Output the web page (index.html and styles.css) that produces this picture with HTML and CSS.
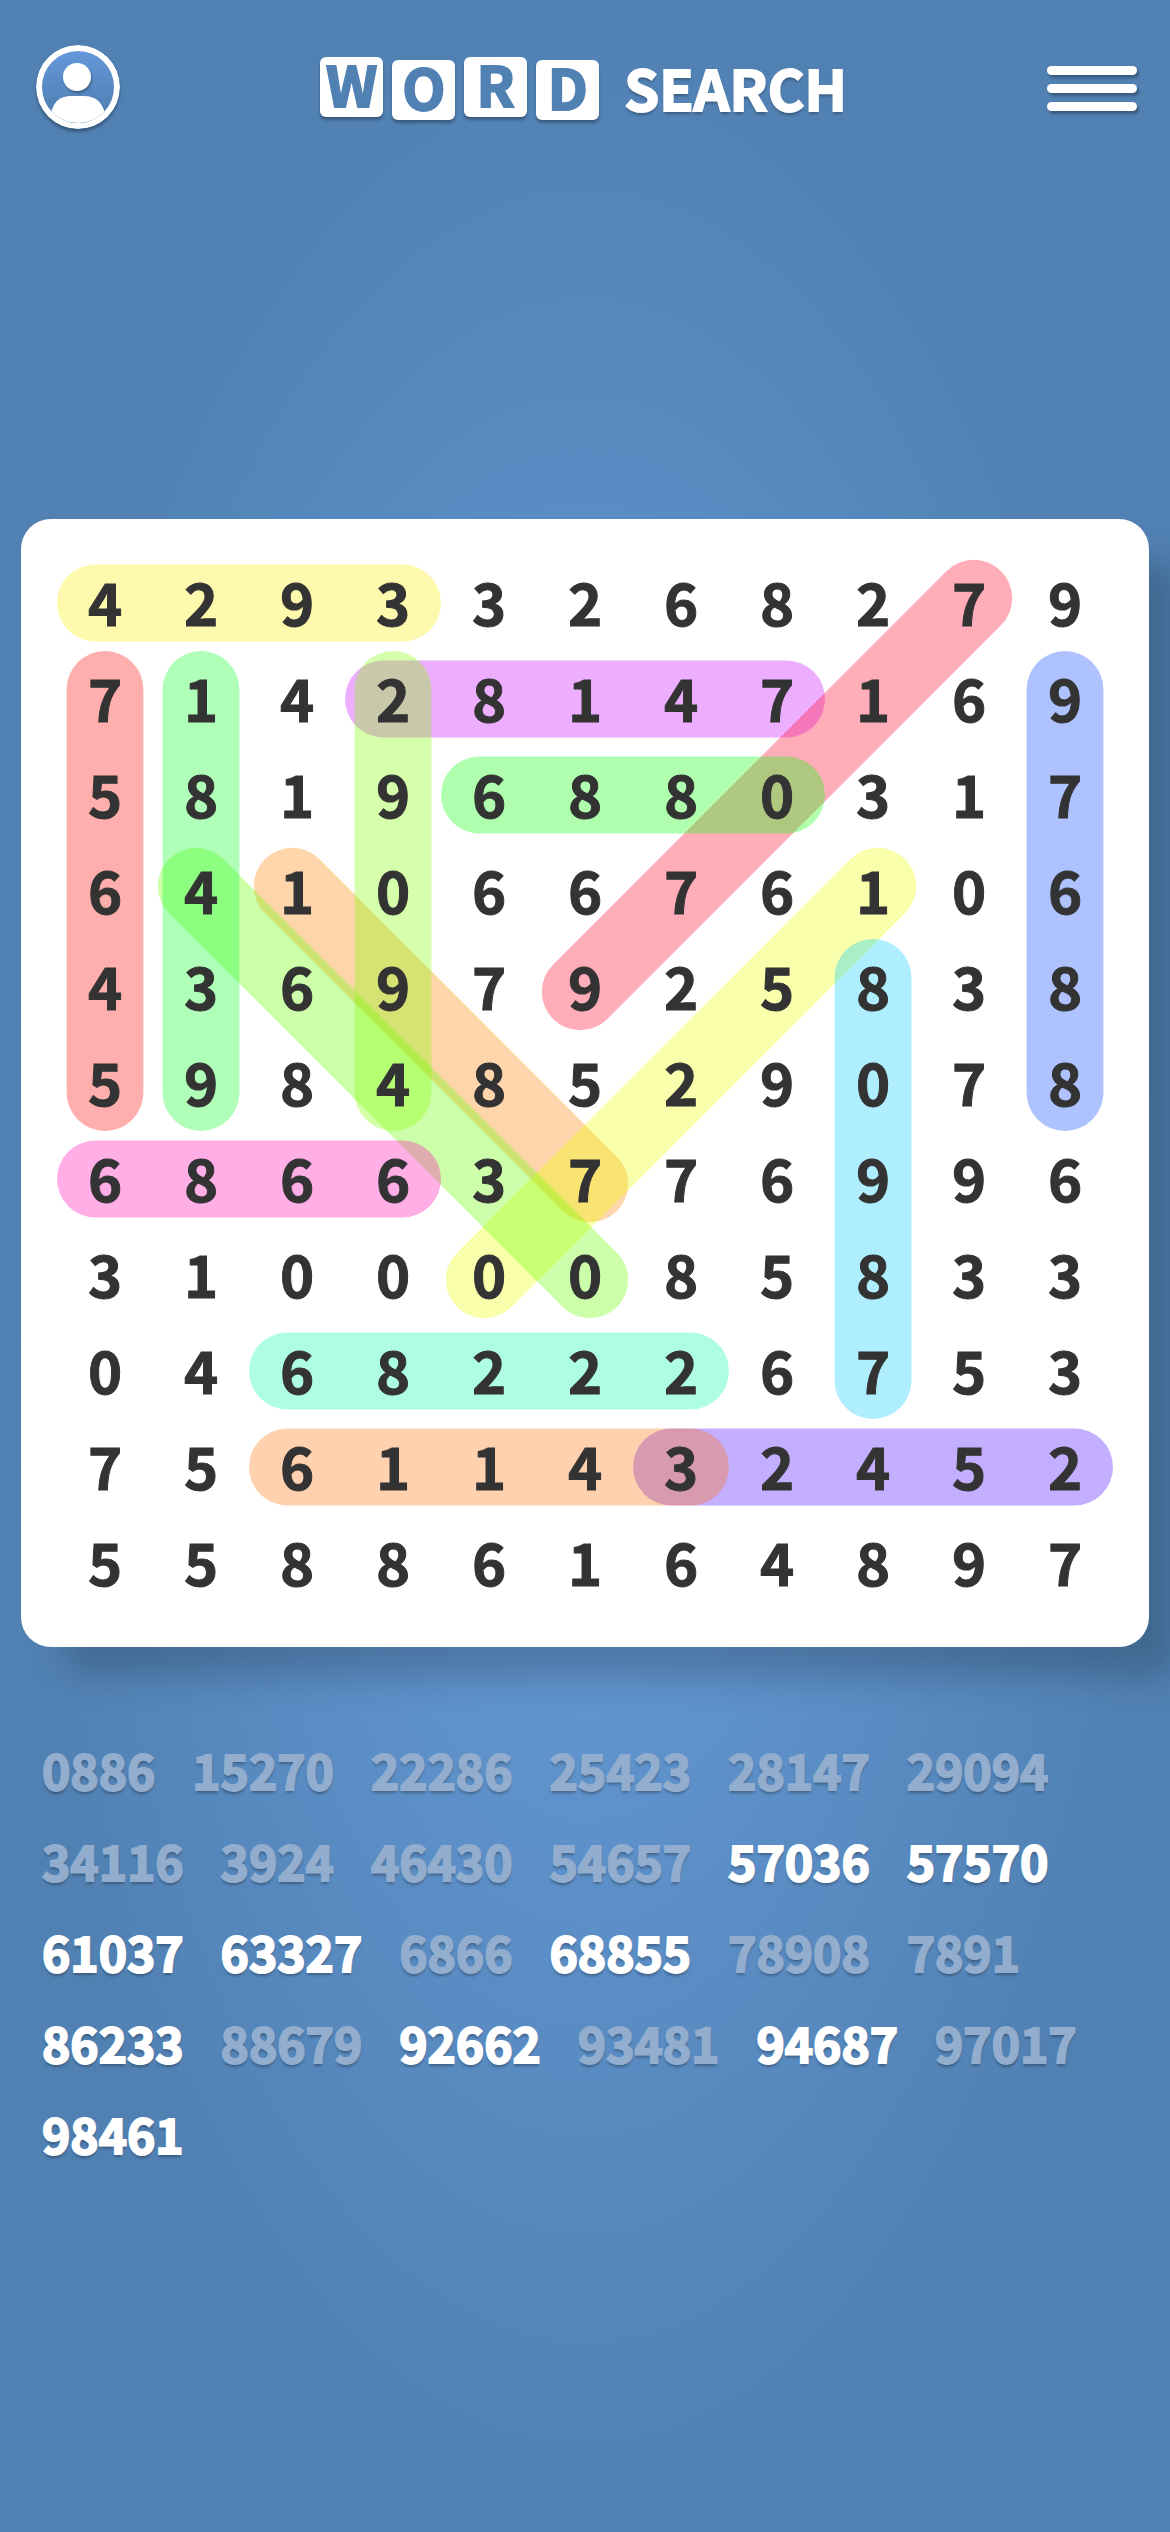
FILE: index.html
```html
<!DOCTYPE html>
<html lang="en">
<head>
    <meta charset="UTF-8">
    <meta name="viewport" content="width=device-width, initial-scale=1.0">
    <title>Word Search</title>
    <link rel="stylesheet" href="styles.css">
</head>
<body>
    <header class="topbar">
        <button class="icon-btn" aria-label="Account">
            <svg class="user-icon" viewBox="0 0 84 84">
                <defs>
                    <linearGradient id="userFill" x1="0" y1="0" x2="0" y2="1">
                        <stop offset="0" stop-color="#69d"/>
                        <stop offset="0.8" stop-color="#5080b3"/>
                    </linearGradient>
                    <clipPath id="userClip"><circle cx="42" cy="42" r="36"/></clipPath>
                </defs>
                <circle cx="42" cy="42" r="39" fill="url(#userFill)" stroke="#fff" stroke-width="6"/>
                <circle class="user-head" cx="41" cy="32" r="14" fill="#fff"/>
                <path d="M15 90V69Q18 51 35 51H48Q65 51 69 69V90Z" fill="#fff" clip-path="url(#userClip)"/>
            </svg>
        </button>
        <h1 class="logo">
            <span class="tile up">W</span><span class="tile">O</span><span class="tile up">R</span><span class="tile">D</span>
            <span class="logo-text">SEARCH</span>
        </h1>
        <button class="icon-btn menu-btn" aria-label="Menu">
            <span class="bar"></span>
            <span class="bar"></span>
            <span class="bar"></span>
        </button>
    </header>

    <main class="game">
        <div class="board">
            <!-- Found words, one unit of 10 per cell -->
            <svg class="marks" viewBox="0 0 110 110">
                <line x1="34" y1="15" x2="76" y2="15" stroke="#c908ff"/>
                <line x1="64" y1="95" x2="106" y2="95" stroke="#4808ff"/>
                <line x1="95.5" y1="4.5" x2="54.5" y2="45.5" stroke="#ff0829"/>
                <line x1="24.5" y1="34.5" x2="55.5" y2="65.5" stroke="#ff8400"/>
                <line x1="85.5" y1="34.5" x2="44.5" y2="75.5" stroke="#edff00"/>
                <line x1="14.5" y1="34.5" x2="55.5" y2="75.5" stroke="#66ff00"/>
                <line x1="4" y1="5" x2="36" y2="5" stroke="#ffed08"/>
                <line x1="5" y1="14" x2="5" y2="56" stroke="#ff0808"/>
                <line x1="15" y1="14" x2="15" y2="56" stroke="#0cff2a"/>
                <line x1="35" y1="14" x2="35" y2="56" stroke="#83ff00"/>
                <line x1="44" y1="25" x2="76" y2="25" stroke="#0cff0c"/>
                <line x1="105" y1="14" x2="105" y2="56" stroke="#0845ff"/>
                <line x1="4" y1="65" x2="36" y2="65" stroke="#ff08b4"/>
                <line x1="85" y1="44" x2="85" y2="86" stroke="#08ccff"/>
                <line x1="24" y1="85" x2="66" y2="85" stroke="#08ffa8"/>
                <line x1="24" y1="95" x2="66" y2="95" stroke="#ff7209"/>
            </svg>
            <div class="grid" id="grid"></div>
        </div>

        <ul class="words">
            <li class="found">0886</li>
            <li class="found">15270</li>
            <li class="found">22286</li>
            <li class="found">25423</li>
            <li class="found">28147</li>
            <li class="found">29094</li>
            <li class="found">34116</li>
            <li class="found">3924</li>
            <li class="found">46430</li>
            <li class="found">54657</li>
            <li>57036</li>
            <li>57570</li>
            <li>61037</li>
            <li>63327</li>
            <li class="found">6866</li>
            <li>68855</li>
            <li class="found">78908</li>
            <li class="found">7891</li>
            <li>86233</li>
            <li class="found">88679</li>
            <li>92662</li>
            <li class="found">93481</li>
            <li>94687</li>
            <li class="found">97017</li>
            <li>98461</li>
        </ul>
    </main>

    <script>
        const rows = [
            '42933268279',
            '71428147169',
            '58196880317',
            '64106676106',
            '43697925838',
            '59848529078',
            '68663776996',
            '31000085833',
            '04682226753',
            '75611432452',
            '55886164897'
        ];

        const grid = document.getElementById('grid');
        rows.join('').split('').forEach(digit => {
            const cell = document.createElement('span');
            cell.className = 'cell';
            cell.textContent = digit;
            grid.appendChild(cell);
        });
    </script>
</body>
</html>
```
FILE: styles.css
```css
:root {
    --bg-light: #689edc;
    --bg-dark: #5181b3;
    --text-color: #333;
    --shadow: rgba(0, 0, 0, 0.3);
}

* {
    box-sizing: border-box;
}

body {
    margin: 0;
    min-height: 100vh;
    font-family: "Noto Sans CJK SC", "Noto Sans", sans-serif;
    font-weight: 700;
    color: white;
    background: radial-gradient(ellipse closest-side, var(--bg-light), var(--bg-dark));
    -webkit-text-stroke: 1px;
}

.topbar {
    display: flex;
    justify-content: space-between;
    align-items: center;
    height: 174px;
    padding: 0 33px 0 36px;
}

.icon-btn {
    padding: 0;
    border: none;
    background: none;
    cursor: pointer;
}

.user-icon {
    display: block;
    width: 84px;
    height: 84px;
    border-radius: 50%;
    box-shadow: 0 3px 3px var(--shadow);
}

.user-head {
    filter: drop-shadow(1px 2px 1px var(--shadow));
}

.logo {
    display: flex;
    align-items: center;
    gap: 9px;
    margin: 0;
    font-size: 56px;
    line-height: 52px;
    -webkit-text-stroke: 2px;
}

.tile {
    width: 63px;
    height: 60px;
    margin-top: 6px;
    border-radius: 6px;
    background: white;
    color: var(--bg-dark);
    text-align: center;
    box-shadow: 0 3px 3px var(--shadow);
}

.tile.up {
    margin-top: 0;
}

.logo-text {
    margin-left: 16px;
    text-shadow: 0 3px 3px var(--shadow);
}

.menu-btn {
    display: flex;
    flex-direction: column;
    gap: 9px;
    width: 90px;
    padding-top: 3px;
}

.bar {
    height: 9px;
    border-radius: 5px;
    background: white;
    box-shadow: 2px 3px 3px var(--shadow);
}

.game {
    padding: 345px 21px 0;
}

.board {
    position: relative;
    padding: 36px;
    border-radius: 30px;
    background: white;
    box-shadow: 36px 36px 36px -6px rgba(0, 0, 0, 0.2);
}

/* Sits under the digits */
.marks {
    position: absolute;
    inset: 36px;
    stroke-width: 8;
    stroke-linecap: round;
    stroke-opacity: 0.33;
}

.grid {
    position: relative;
    display: grid;
    grid-template-columns: repeat(11, 1fr);
}

.cell {
    display: flex;
    align-items: center;
    justify-content: center;
    aspect-ratio: 1;
    padding-bottom: 4px;
    color: var(--text-color);
    font-size: 58px;
    line-height: 1;
}

.words {
    display: flex;
    flex-wrap: wrap;
    column-gap: 37px;
    margin: 77px 0 0;
    padding: 0 21px;
    list-style: none;
    font-size: 48px;
    line-height: 91px;
    text-shadow: 0 3px 3px var(--shadow);
    -webkit-text-stroke: 2px;
}

.found {
    color: #92adce;
}
```
